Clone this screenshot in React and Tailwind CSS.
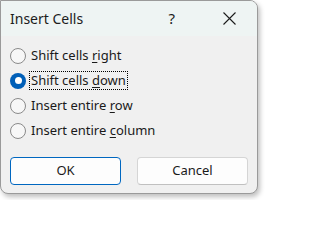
import React from 'react';

function Radio({ checked }) {
  if (checked) {
    return (
      <span className="flex h-[16px] w-[16px] items-center justify-center rounded-full bg-[#005fb8]">
        <span className="h-[7px] w-[7px] rounded-full bg-white" />
      </span>
    );
  }
  return <span className="h-[16px] w-[16px] rounded-full border border-[#8a8a8a] bg-[#f7f7f7]" />;
}

function Option({ before, mnemonic, after, checked, focused }) {
  return (
    <div className="flex h-[25px] items-center gap-[4px]">
      <Radio checked={checked} />
      <span
        className={
          'px-[1px] leading-[17px] ' +
          (focused ? 'outline outline-1 outline-dotted outline-black' : '')
        }
      >
        {before}
        <span className="underline underline-offset-2">{mnemonic}</span>
        {after}
      </span>
    </div>
  );
}

export default function App() {
  return (
    <div className="h-[200px] w-[262px] bg-white">
      <div
        className="flex h-[194px] w-[258px] flex-col overflow-hidden rounded-r-lg rounded-bl-lg border border-[#9a9a9a] bg-[#f0f0f0] text-[13px] text-[#1a1a1a] shadow-[2px_3px_5px_rgba(0,0,0,0.25)]"
        style={{ fontFamily: '"Noto Sans", sans-serif' }}
      >
        <div className="flex h-[35px] shrink-0 items-center bg-[#eef4f3] pl-[9px]">
          <span className="text-[14px] text-[#1c1c1c]">Insert Cells</span>
          <span className="ml-auto mr-[48px] text-[15px] text-[#1c1c1c]">?</span>
          <svg width="13" height="13" viewBox="0 0 13 13" className="mr-[21px]">
            <path d="M0.5 0.5 L12.5 12.5 M12.5 0.5 L0.5 12.5" stroke="#1c1c1c" strokeWidth="1.1" fill="none" />
          </svg>
        </div>
        <div className="flex flex-col pl-[9px] pt-[7px]">
          <Option before="Shift cells " mnemonic="r" after="ight" />
          <Option before="Shift cells " mnemonic="d" after="own" checked focused />
          <Option before="Insert entire " mnemonic="r" after="ow" />
          <Option before="Insert entire " mnemonic="c" after="olumn" />
        </div>
        <div className="mt-[14px] flex gap-[16px] pl-[9px]">
          <button className="h-[28px] w-[111px] rounded-[4px] border border-[#0067c0] bg-[#fdfdfd] text-[13px] text-[#1a1a1a]">
            OK
          </button>
          <button className="h-[28px] w-[111px] rounded-[4px] border border-[#d5d5d5] border-b-[#c0c0c0] bg-[#fdfdfd] text-[13px] text-[#1a1a1a]">
            Cancel
          </button>
        </div>
      </div>
    </div>
  );
}
